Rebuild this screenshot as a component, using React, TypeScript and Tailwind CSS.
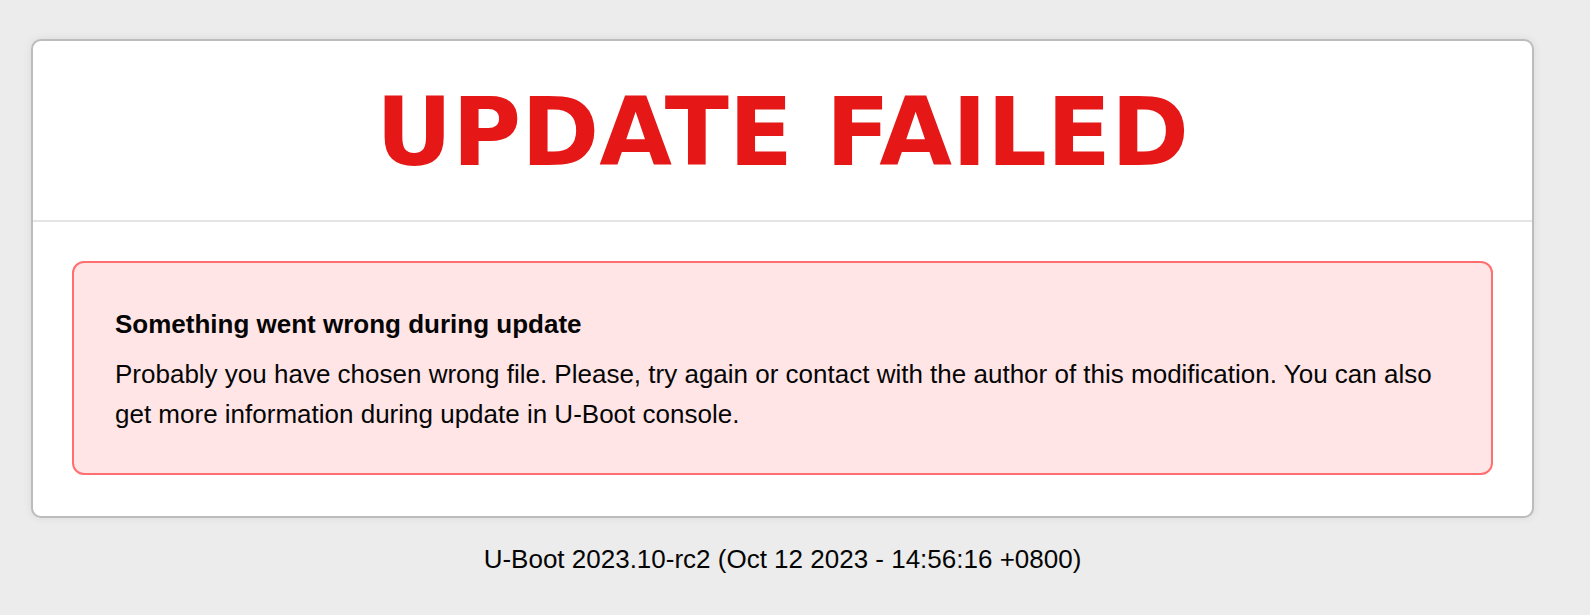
export default function App() {
  return (
    <main
      className="min-h-screen w-full bg-[#ececec] pt-[39px] text-[#050505]"
      style={{ fontFamily: '"Liberation Sans", Arial, sans-serif' }}
    >
      <div className="ml-[31px] w-[1503px]">
        <section className="h-[479px] rounded-[10px] border-2 border-[#bcbcbc] bg-white shadow-[0_0_8px_rgba(0,0,0,0.08)]">
          <header className="flex h-[181px] items-center justify-center border-b-2 border-[#e4e4e4] pt-[5px]">
            <h1 className="font-['DejaVu_Sans',_sans-serif] text-[94px] font-bold leading-none text-[#e51717]">
              UPDATE FAILED
            </h1>
          </header>
          <div className="px-[39px] pt-[39px]">
            <div className="h-[214px] rounded-[12px] border-2 border-[#ff6f6f] bg-[#ffe5e6] px-[41px] pt-[41px]">
              <h2 className="text-[26px] font-bold leading-[40px]">Something went wrong during update</h2>
              <p className="mt-[10px] text-[26px] leading-[40px]">
                Probably you have chosen wrong file. Please, try again or contact with the author of this
                modification. You can also get more information during update in U-Boot console.
              </p>
            </div>
          </div>
        </section>
        <footer className="mt-[21px] text-center text-[26px] leading-[40px]">
          U-Boot 2023.10-rc2 (Oct 12 2023 - 14:56:16 +0800)
        </footer>
      </div>
    </main>
  )
}
